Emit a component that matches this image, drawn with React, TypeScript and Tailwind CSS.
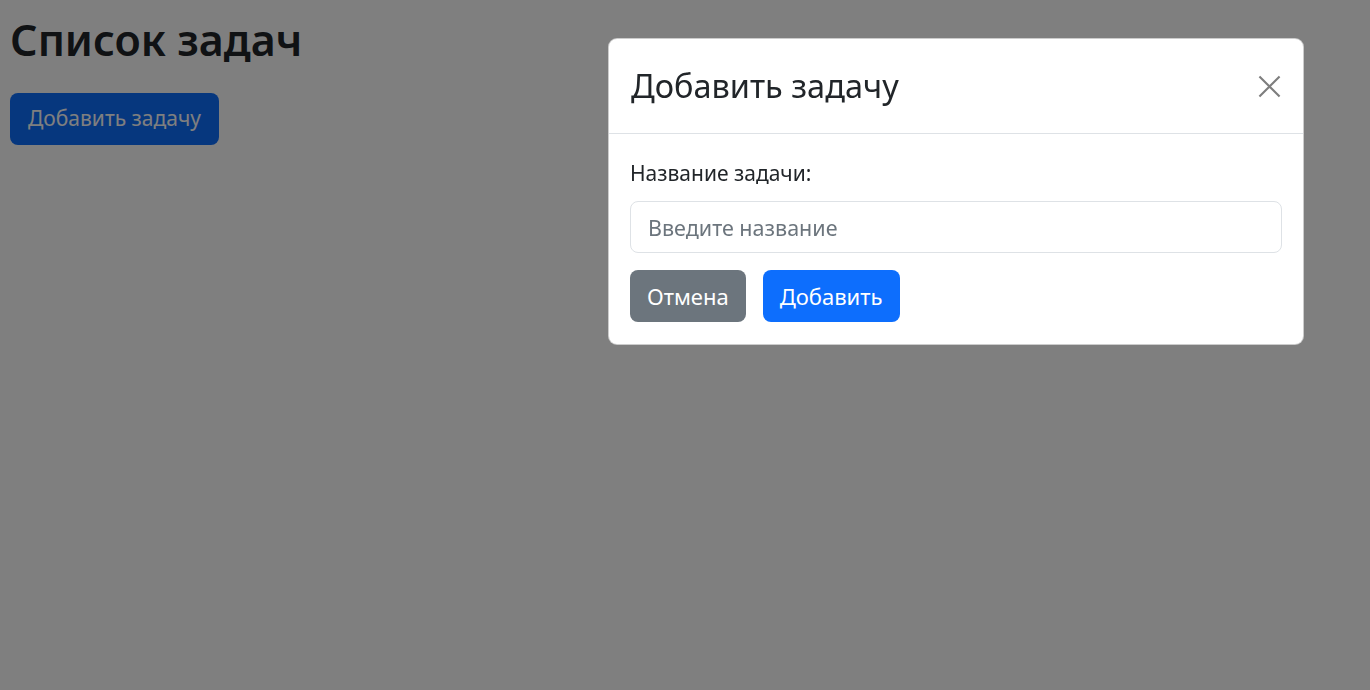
import { useState } from 'react'

const font = { fontFamily: '"Noto Sans", "Open Sans", sans-serif' }

function CloseIcon() {
  return (
    <svg viewBox="0 0 16 16" className="w-[23px] h-[23px]" fill="none" stroke="#000" strokeWidth={1.5}>
      <path d="M1 1 15 15M15 1 1 15" />
    </svg>
  )
}

export default function App() {
  const [title, setTitle] = useState('')

  return (
    <div className="relative w-[1370px] h-[690px] bg-white text-[#212529] overflow-hidden" style={font}>
      {/* Page */}
      <div className="px-[10px] pt-[14px]">
        <h1 className="text-[43px] font-semibold leading-[1.2] mb-[27px]">Список задач</h1>
        <button className="h-[52px] px-[18px] rounded-[8px] bg-[#0d6efd] text-white text-[21px] leading-[33px]">
          Добавить задачу
        </button>
      </div>

      {/* Backdrop */}
      <div className="fixed inset-0 bg-[rgba(0,0,0,0.5)]" />

      {/* Modal */}
      <div className="absolute left-[608px] top-[38px] w-[696px] bg-white rounded-[9px] border border-black/20">
        <div className="h-[95px] flex items-center justify-between px-[22px] border-b border-[#dee2e6]">
          <h5 className="text-[32.5px] leading-[1.5] font-normal">Добавить задачу</h5>
          <button className="opacity-50 flex items-center justify-center">
            <CloseIcon />
          </button>
        </div>
        <div className="px-[21px] pt-[23px] pb-[22px]">
          <label className="block text-[21px] leading-[33px] mb-[11px]">Название задачи:</label>
          <input
            value={title}
            onChange={(e) => setTitle(e.target.value)}
            placeholder="Введите название"
            className="block w-full h-[52px] px-[17px] rounded-[8px] border border-[#dee2e6] text-[21.5px] outline-none placeholder-[#6c757d]"
          />
          <div className="flex gap-[17px] mt-[17px]">
            <button className="h-[52px] px-[17px] rounded-[8px] bg-[#6c757d] text-white text-[22px]">Отмена</button>
            <button className="h-[52px] px-[17px] rounded-[8px] bg-[#0d6efd] text-white text-[22px]">Добавить</button>
          </div>
        </div>
      </div>
    </div>
  )
}
